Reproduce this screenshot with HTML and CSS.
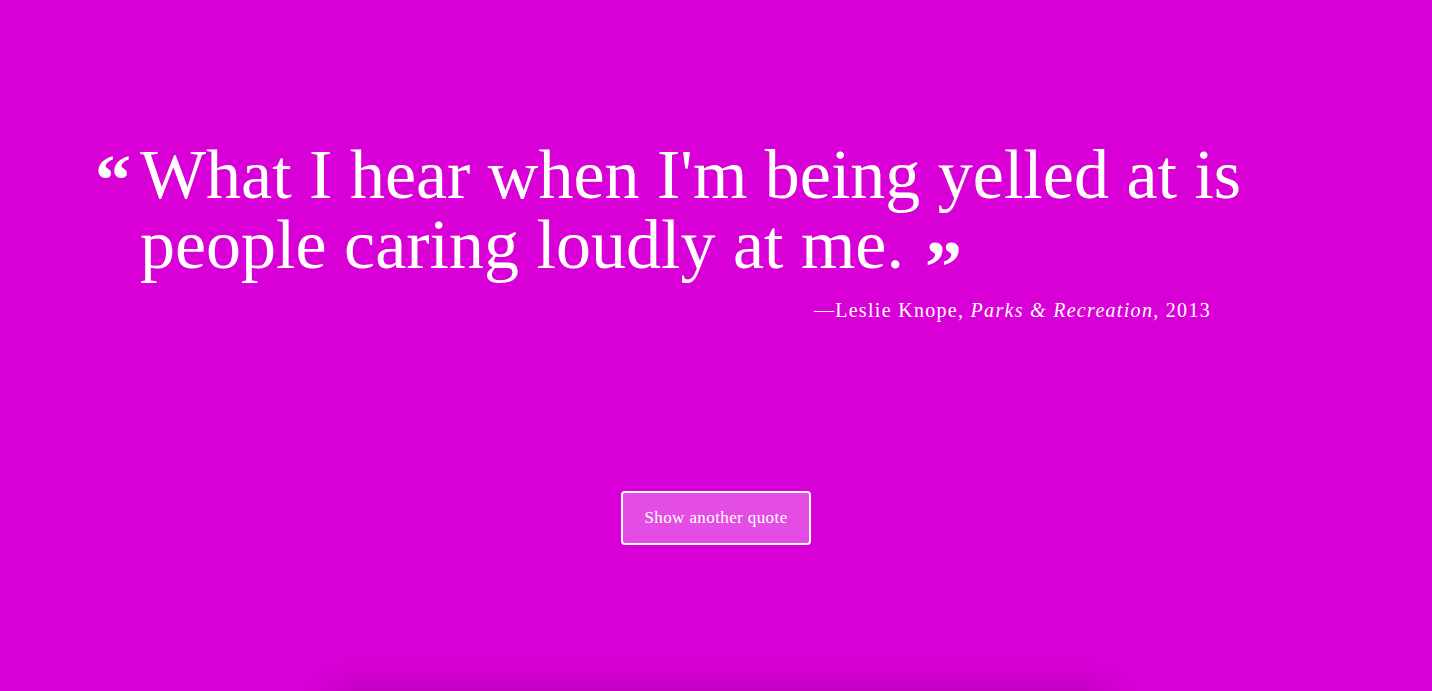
FILE: index.html
```html
<!DOCTYPE html>
<html lang="en">
<head>
<meta charset="utf-8">
<title>Random Quote</title>
<link rel="stylesheet" href="styles.css">
</head>
<body>
<main class="page">
  <section class="quote-box">
    <div class="quote-row">
      <span class="mark mark-open">&ldquo;</span>
      <p class="quote-text">What I hear when I'm being yelled at is people caring loudly at me.<span class="mark mark-close">&rdquo;</span></p>
    </div>
    <p class="attribution">&mdash;Leslie Knope, <em>Parks &amp; Recreation</em>, 2013</p>
  </section>
  <div class="actions">
    <button class="btn" type="button">Show another quote</button>
  </div>
  <div class="footer-shadow"></div>
</main>
</body>
</html>
```
FILE: styles.css
```css
html, body {
  margin: 0;
  padding: 0;
  height: 100%;
  overflow: hidden;
}
body {
  background: #d900d7;
  color: #fff;
  font-family: "Liberation Serif", "DejaVu Serif", serif;
}
.page {
  height: 691px;
  display: flex;
  flex-direction: column;
  position: relative;
  overflow: hidden;
}
.quote-box {
  padding: 140px 0 0 95px;
}
.quote-row {
  display: flex;
  align-items: flex-start;
}
.mark {
  font-family: "Liberation Serif", serif;
  font-weight: bold;
  line-height: 1;
}
.mark-open {
  font-size: 72px;
  width: 45px;
  flex: none;
  margin-top: 4px;
}
.mark-close {
  font-size: 74px;
  line-height: 0;
  margin-left: 21px;
  vertical-align: -24px;
}
.quote-text {
  margin: 0;
  width: 1120px;
  font-size: 70px;
  line-height: 70px;
}
.attribution {
  margin: 19px 0 0;
  width: 1116px;
  text-align: right;
  font-size: 20px;
  letter-spacing: 1.3px;
}
.attribution em {
  font-style: italic;
}
.actions {
  display: flex;
  justify-content: center;
  margin-top: 169px;
}
.btn {
  width: 190px;
  height: 54px;
  border: 2px solid #fff;
  border-radius: 4px;
  background: rgba(255, 255, 255, 0.3);
  color: #fff;
  font-family: "Liberation Serif", "DejaVu Serif", serif;
  font-size: 17px;
  letter-spacing: 0.4px;
  cursor: pointer;
}
.footer-shadow {
  position: absolute;
  left: 330px;
  width: 780px;
  top: 700px;
  height: 100px;
  box-shadow: 0 -6px 40px rgba(80, 0, 80, 0.35);
  background: #d900d7;
}
```
